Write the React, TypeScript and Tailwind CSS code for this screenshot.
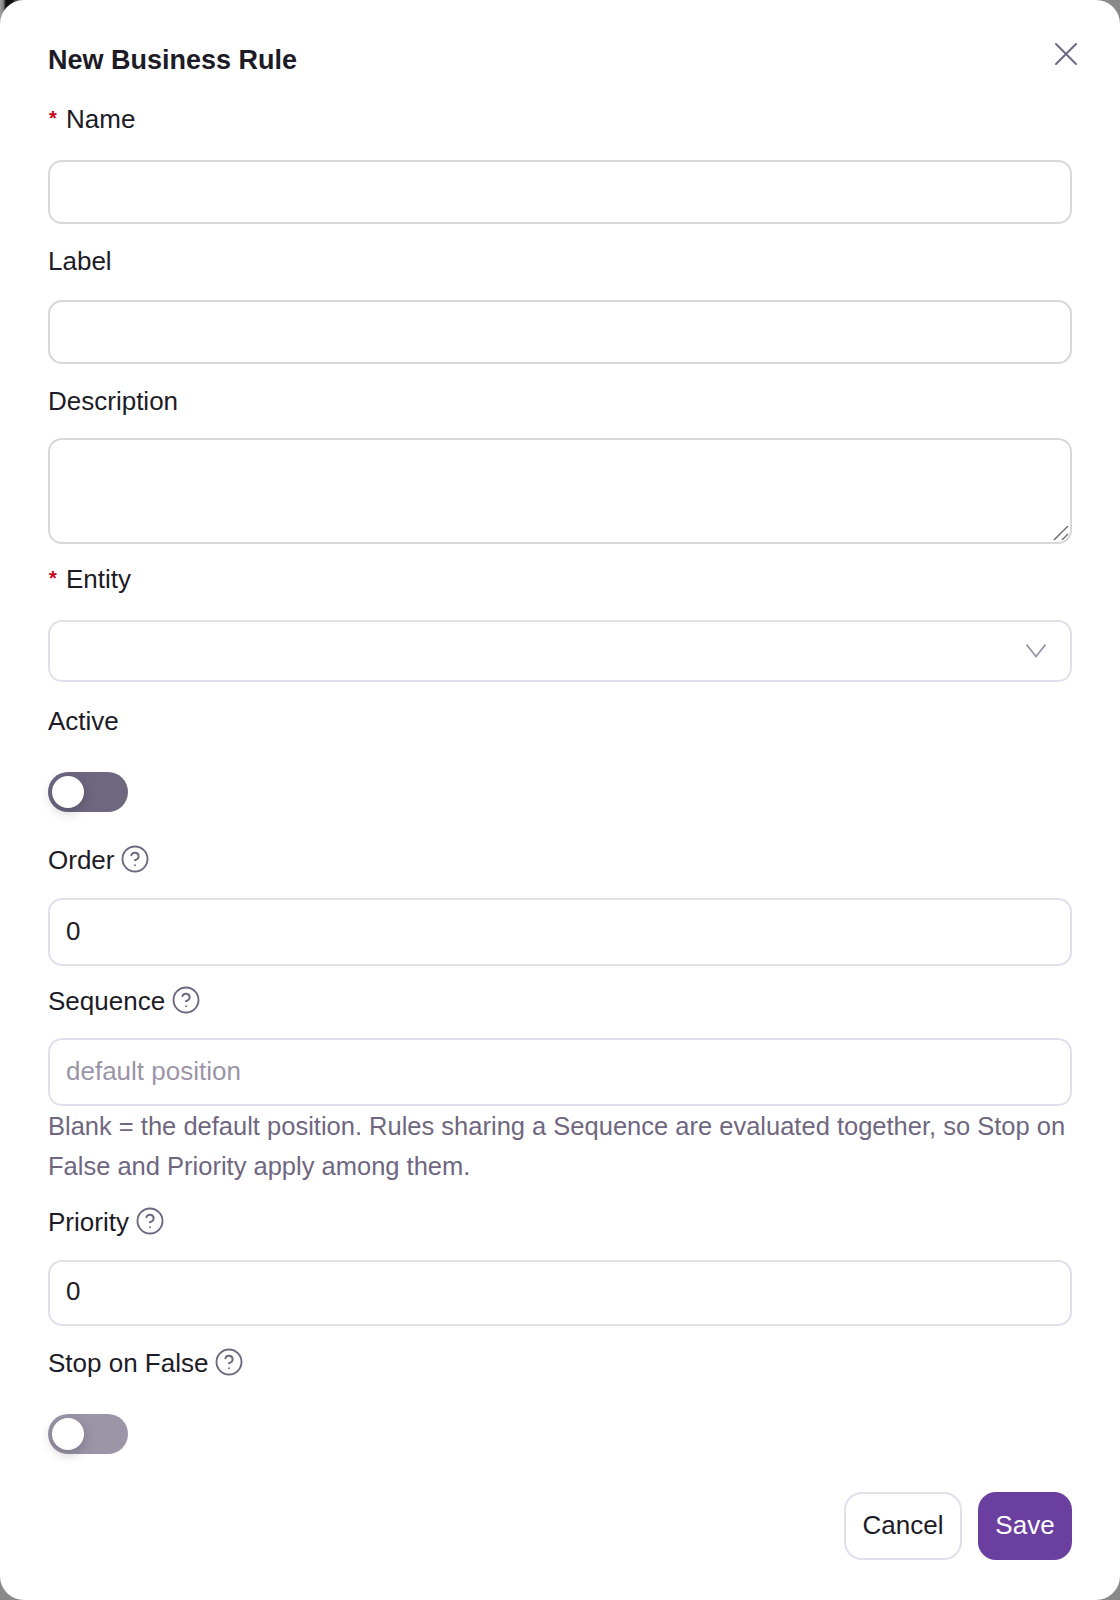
import type { ReactNode } from "react";
import { CircleHelp, X } from "lucide-react";

const inputClass =
  "block w-full rounded-[14px] border-2 bg-white px-[16px] pb-[2px] text-[26px] text-[#1d1b26] outline-none placeholder:text-[#9c95a8]";

function FieldLabel({
  children,
  required,
  help,
  className,
}: {
  children: ReactNode;
  required?: boolean;
  help?: boolean;
  className: string;
}) {
  return (
    <label className={`flex h-[24px] items-center text-[26px] leading-[24px] text-[#1d1b26] ${className}`}>
      {required && <span className="mb-[2px] ml-[1px] mr-[8px] w-[9px] text-[20px] font-bold text-[#c4001a]">*</span>}
      {children}
      {help && <CircleHelp className="mb-[2px] ml-[6px] text-[#6f6780]" size={30} strokeWidth={1.5} />}
    </label>
  );
}

function Toggle({ muted, className }: { muted?: boolean; className: string }) {
  return (
    <button
      type="button"
      role="switch"
      aria-checked="false"
      className={`flex h-[40px] w-[80px] items-center rounded-full p-[4px] ${muted ? "bg-[#9c95a8]" : "bg-[#6f6780]"} ${className}`}
    >
      <span className="size-[32px] rounded-full bg-white shadow-[0_4px_12px_rgba(29,27,38,0.25)]" />
    </button>
  );
}

export default function App() {
  return (
    <div className="h-[1600px] w-[1120px] bg-[#8a8a8a] bg-[linear-gradient(90deg,#a0a0a0_0,#888_3px,#111_6px,#111_12px,#888_20px)] bg-size-[24px_24px] bg-no-repeat font-['Liberation_Sans',sans-serif]">
      <div className="relative h-full rounded-[24px] bg-white px-[48px] pt-[46px]">
        <button type="button" aria-label="Close" className="absolute right-[34px] top-[34px] text-[#6f6780]">
          <X size={40} strokeWidth={1.2} />
        </button>
        <h2 className="h-[28px] text-[27px] font-bold leading-[28px] text-[#1d1b26]">New Business Rule</h2>

        <FieldLabel required className="mt-[33px]">Name</FieldLabel>
        <input className={`${inputClass} mt-[29px] h-[64px] border-[#d8d8d8]`} />

        <FieldLabel className="mt-[25px]">Label</FieldLabel>
        <input className={`${inputClass} mt-[27px] h-[64px] border-[#d8d8d8]`} />

        <FieldLabel className="mt-[25px]">Description</FieldLabel>
        <div className="relative mt-[25px]">
          <textarea className={`${inputClass} h-[106px] resize-none border-[#d8d8d8]`} />
          <svg className="absolute bottom-[4px] right-[3px] text-[#6b6b6b]" width="16" height="14" viewBox="0 0 16 14" fill="none" stroke="currentColor" strokeWidth="1.4">
            <path d="M1 14 15 0M9 14l6-6" />
          </svg>
        </div>

        <FieldLabel required className="mt-[23px]">Entity</FieldLabel>
        <div className="mt-[29px] flex h-[62px] items-center justify-end rounded-[14px] border-2 border-[#e2dfec] bg-white pr-[24px]">
          <svg className="text-[#9c95a8]" width="20" height="14" viewBox="0 0 20 14" fill="none" stroke="currentColor" strokeWidth="1.8">
            <path d="M0.5 0.5 10 12.5 19.5 0.5" />
          </svg>
        </div>

        <FieldLabel className="mt-[27px]">Active</FieldLabel>
        <Toggle className="mt-[39px]" />

        <FieldLabel help className="mt-[36px]">Order</FieldLabel>
        <input defaultValue="0" className={`${inputClass} mt-[26px] h-[68px] border-[#e2dfec]`} />

        <FieldLabel help className="mt-[23px]">Sequence</FieldLabel>
        <input placeholder="default position" className={`${inputClass} mt-[25px] h-[68px] border-[#e2dfec]`} />
        <p className="text-[25.5px] leading-[40px] text-[#6f6780]">
          Blank = the default position. Rules sharing a Sequence are evaluated together, so Stop on False and Priority
          apply among them.
        </p>

        <FieldLabel help className="mt-[24px]">Priority</FieldLabel>
        <input defaultValue="0" className={`${inputClass} mt-[26px] h-[66px] border-[#e2dfec] pb-[4px]`} />

        <FieldLabel help className="mt-[25px]">Stop on False</FieldLabel>
        <Toggle muted className="mt-[39px]" />

        <div className="mt-[38px] flex justify-end gap-[16px]">
          <button type="button" className="h-[68px] w-[118px] rounded-[18px] border-2 border-[#e2dfec] bg-white pb-[2px] text-[26px] text-[#1d1b26]">
            Cancel
          </button>
          <button type="button" className="h-[68px] w-[94px] rounded-[18px] bg-[#6b3fa0] pb-[2px] text-[26px] font-medium text-white">
            Save
          </button>
        </div>
      </div>
    </div>
  );
}
